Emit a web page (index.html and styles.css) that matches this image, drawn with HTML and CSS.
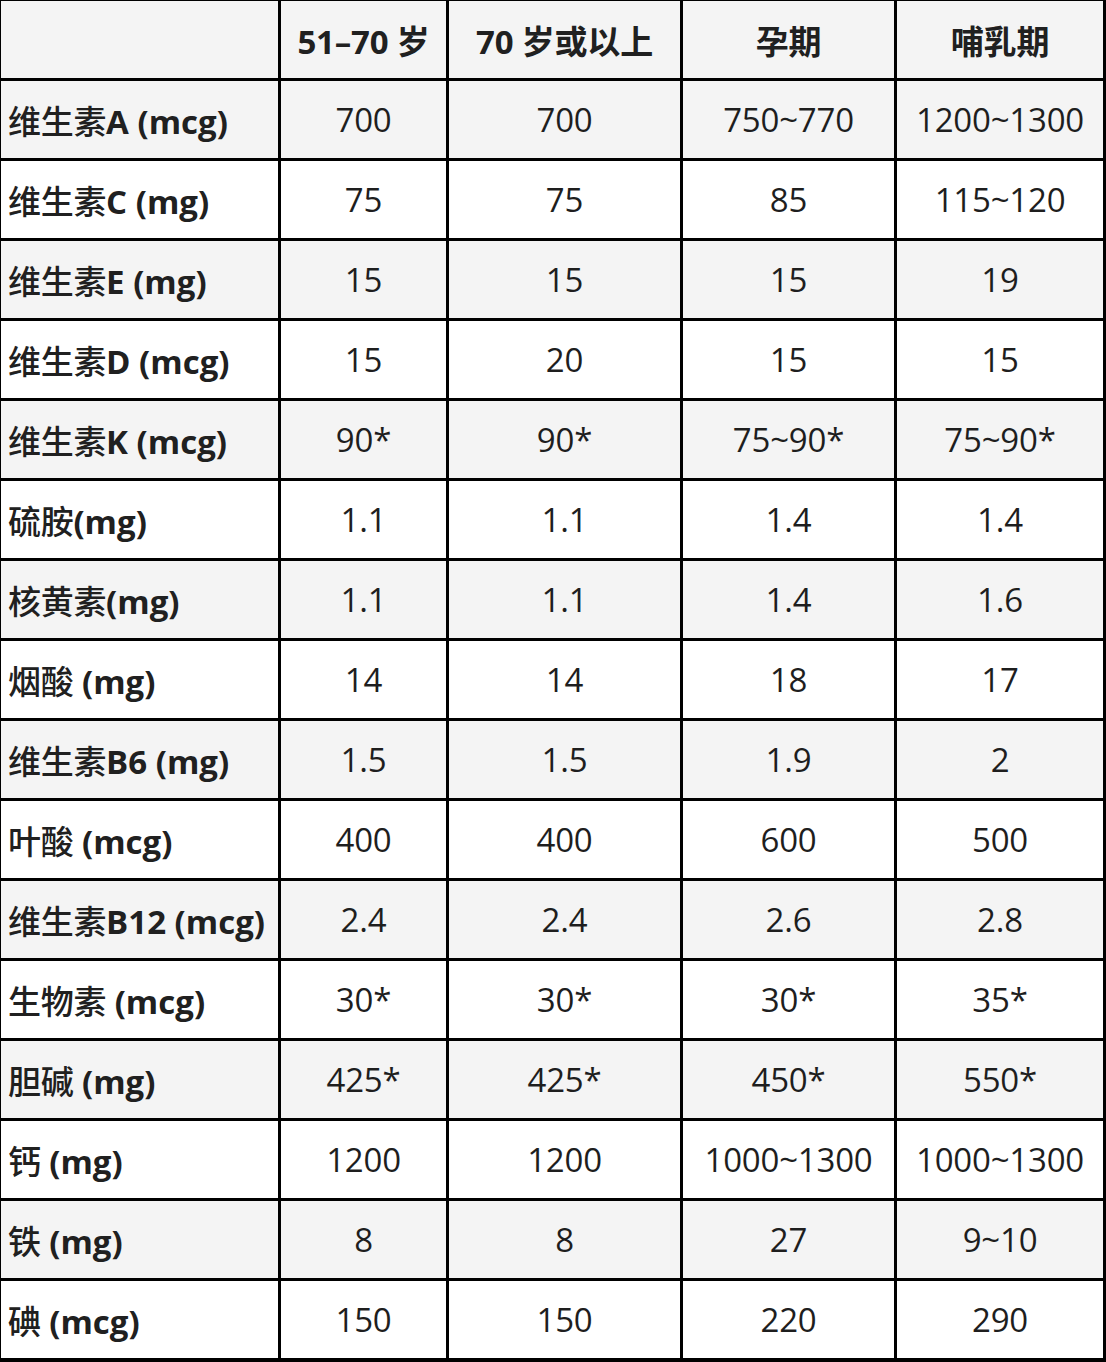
FILE: index.html
```html
<!DOCTYPE html>
<html lang="zh-CN">
<head>
<meta charset="utf-8">
<title>维生素与矿物质推荐摄入量</title>
<link rel="stylesheet" href="styles.css">
</head>
<body>
<div class="grid">
  <div class="cell head label"></div>
  <div class="cell head">51–70 岁</div>
  <div class="cell head">70 岁或以上</div>
  <div class="cell head">孕期</div>
  <div class="cell head">哺乳期</div>

  <div class="cell label gray"><span><span class="zh">维生素</span>A (mcg)</span></div>
  <div class="cell gray">700</div><div class="cell gray">700</div><div class="cell gray">750~770</div><div class="cell gray">1200~1300</div>

  <div class="cell label"><span><span class="zh">维生素</span>C (mg)</span></div>
  <div class="cell">75</div><div class="cell">75</div><div class="cell">85</div><div class="cell">115~120</div>

  <div class="cell label gray"><span><span class="zh">维生素</span>E (mg)</span></div>
  <div class="cell gray">15</div><div class="cell gray">15</div><div class="cell gray">15</div><div class="cell gray">19</div>

  <div class="cell label"><span><span class="zh">维生素</span>D (mcg)</span></div>
  <div class="cell">15</div><div class="cell">20</div><div class="cell">15</div><div class="cell">15</div>

  <div class="cell label gray"><span><span class="zh">维生素</span>K (mcg)</span></div>
  <div class="cell gray">90*</div><div class="cell gray">90*</div><div class="cell gray">75~90*</div><div class="cell gray">75~90*</div>

  <div class="cell label"><span><span class="zh">硫胺</span>(mg)</span></div>
  <div class="cell">1.1</div><div class="cell">1.1</div><div class="cell">1.4</div><div class="cell">1.4</div>

  <div class="cell label gray"><span><span class="zh">核黄素</span>(mg)</span></div>
  <div class="cell gray">1.1</div><div class="cell gray">1.1</div><div class="cell gray">1.4</div><div class="cell gray">1.6</div>

  <div class="cell label"><span><span class="zh">烟酸</span> (mg)</span></div>
  <div class="cell">14</div><div class="cell">14</div><div class="cell">18</div><div class="cell">17</div>

  <div class="cell label gray"><span><span class="zh">维生素</span>B6 (mg)</span></div>
  <div class="cell gray">1.5</div><div class="cell gray">1.5</div><div class="cell gray">1.9</div><div class="cell gray">2</div>

  <div class="cell label"><span><span class="zh">叶酸</span> (mcg)</span></div>
  <div class="cell">400</div><div class="cell">400</div><div class="cell">600</div><div class="cell">500</div>

  <div class="cell label gray"><span><span class="zh">维生素</span>B12 (mcg)</span></div>
  <div class="cell gray">2.4</div><div class="cell gray">2.4</div><div class="cell gray">2.6</div><div class="cell gray">2.8</div>

  <div class="cell label"><span><span class="zh">生物素</span> (mcg)</span></div>
  <div class="cell">30*</div><div class="cell">30*</div><div class="cell">30*</div><div class="cell">35*</div>

  <div class="cell label gray"><span><span class="zh">胆碱</span> (mg)</span></div>
  <div class="cell gray">425*</div><div class="cell gray">425*</div><div class="cell gray">450*</div><div class="cell gray">550*</div>

  <div class="cell label"><span><span class="zh">钙</span> (mg)</span></div>
  <div class="cell">1200</div><div class="cell">1200</div><div class="cell">1000~1300</div><div class="cell">1000~1300</div>

  <div class="cell label gray"><span><span class="zh">铁</span> (mg)</span></div>
  <div class="cell gray">8</div><div class="cell gray">8</div><div class="cell gray">27</div><div class="cell gray">9~10</div>

  <div class="cell label"><span><span class="zh">碘</span> (mcg)</span></div>
  <div class="cell">150</div><div class="cell">150</div><div class="cell">220</div><div class="cell">290</div>
</div>
</body>
</html>
```

FILE: styles.css
```css
html, body {
  margin: 0;
  padding: 0;
  background: #ffffff;
}

.grid {
  display: grid;
  grid-template-columns: 277px 165px 231px 211px 206px;
  grid-auto-rows: 77px;
  gap: 3px;
  padding: 1px 3px 4px 1px;
  width: 1106px;
  height: 1362px;
  box-sizing: border-box;
  background: #000000;
  font-family: "Open Sans", "Noto Sans CJK SC", sans-serif;
  font-size: 33px;
  color: #1e1e1e;
}

.cell {
  background: #ffffff;
  display: flex;
  align-items: center;
  justify-content: center;
  white-space: nowrap;
  letter-spacing: -0.2px;
}

.cell.gray,
.cell.head {
  background: #f4f4f4;
}

.cell.head {
  font-size: 33px;
  font-weight: 700;
  color: #202020;
}

.cell.label {
  justify-content: flex-start;
  padding-left: 7px;
  font-size: 33px;
  font-weight: 700;
  color: #202020;
  letter-spacing: 0;
}

.zh {
  font-family: "Noto Sans CJK SC", sans-serif;
  font-weight: 500;
  letter-spacing: -0.3px;
}
```
